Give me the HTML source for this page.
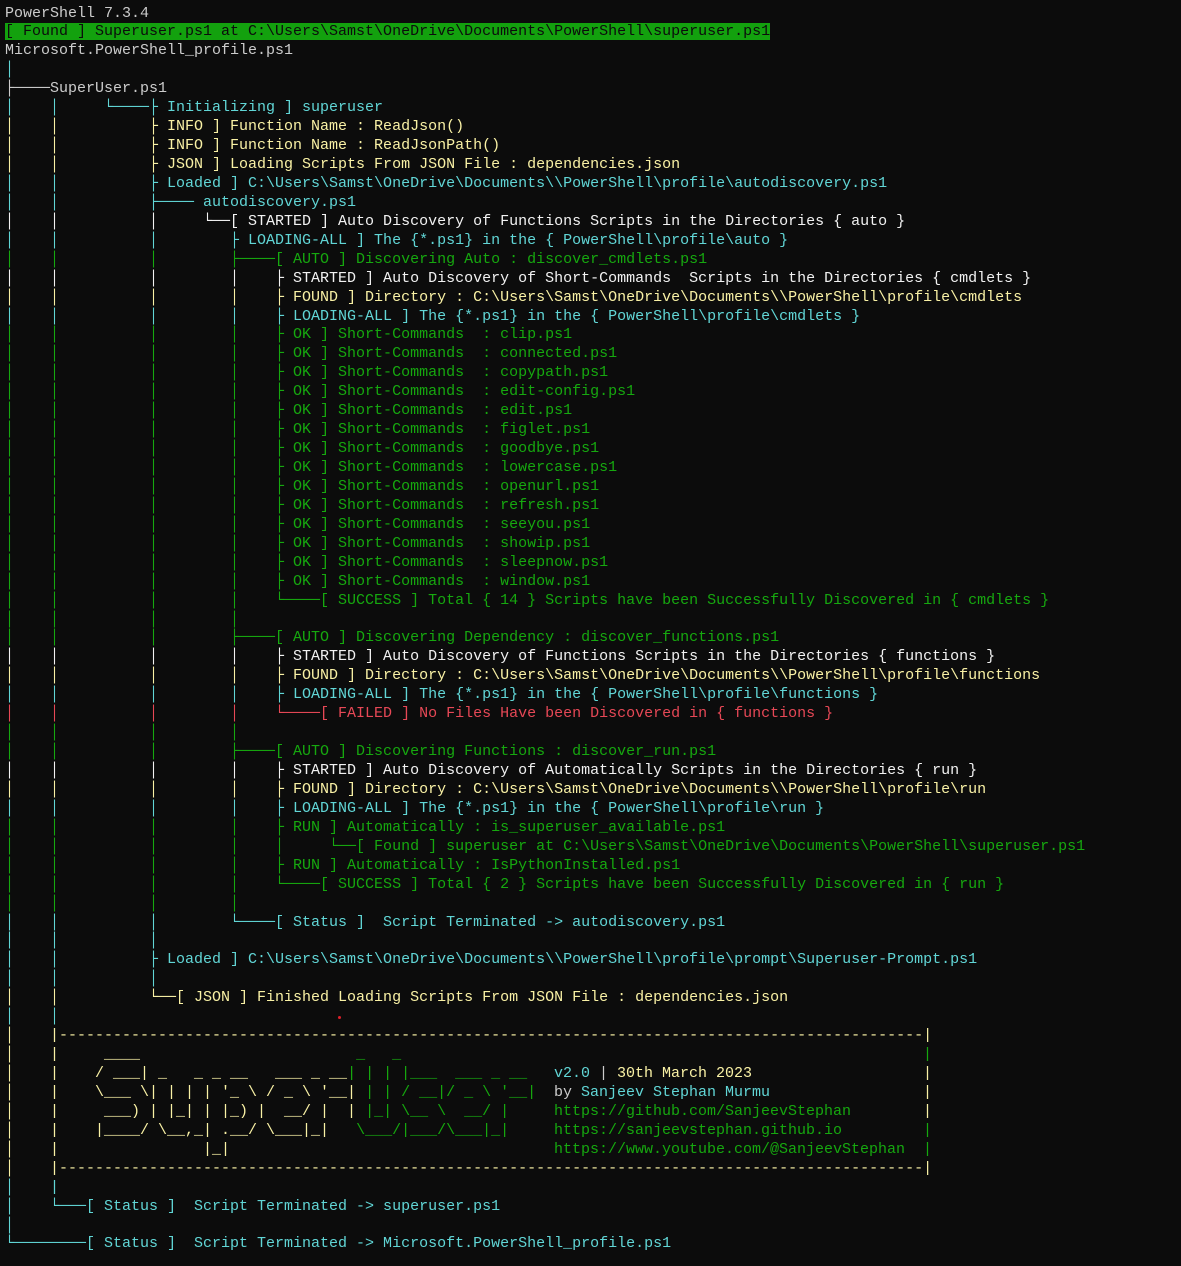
<!DOCTYPE html>
<html><head><meta charset="utf-8">
<style>
html,body{margin:0;padding:0;background:#0c0c0c;}
body{width:1181px;height:1266px;overflow:hidden;position:relative;}
#t{position:absolute;left:5px;top:4.5px;font-family:"Liberation Mono",monospace;font-size:15px;}
#t div{height:18.94px;line-height:18.94px;position:relative;white-space:pre;}
.c{color:#61d6d6}.y{color:#f9f1a5}.g{color:#16a80f}.w{color:#f2f2f2}.r{color:#e74856}.d{color:#cccccc}
.hl{background:#13a10e;color:#0c0c0c}
.ab{position:absolute;top:0}
</style></head><body>
<div id="t"><div class="d">PowerShell 7.3.4</div><div><span class="hl">[ Found ] Superuser.ps1 at C:\Users\Samst\OneDrive\Documents\PowerShell\superuser.ps1</span></div><div class="d">Microsoft.PowerShell_profile.ps1</div><div class="c">│</div><div class="d">├────SuperUser.ps1</div><div class="c">│    │     └────├ Initializing ] superuser</div><div class="y">│    │          ├ INFO ] Function Name : ReadJson()</div><div class="y">│    │          ├ INFO ] Function Name : ReadJsonPath()</div><div class="y">│    │          ├ JSON ] Loading Scripts From JSON File : dependencies.json</div><div class="c">│    │          ├ Loaded ] C:\Users\Samst\OneDrive\Documents\\PowerShell\profile\autodiscovery.ps1</div><div class="c">│    │          ├──── autodiscovery.ps1</div><div class="w">│    │          │     └──[ STARTED ] Auto Discovery of Functions Scripts in the Directories { auto }</div><div class="c">│    │          │        ├ LOADING-ALL ] The {*.ps1} in the { PowerShell\profile\auto }</div><div class="g">│    │          │        ├────[ AUTO ] Discovering Auto : discover_cmdlets.ps1</div><div class="w">│    │          │        │    ├ STARTED ] Auto Discovery of Short-Commands  Scripts in the Directories { cmdlets }</div><div class="y">│    │          │        │    ├ FOUND ] Directory : C:\Users\Samst\OneDrive\Documents\\PowerShell\profile\cmdlets</div><div class="c">│    │          │        │    ├ LOADING-ALL ] The {*.ps1} in the { PowerShell\profile\cmdlets }</div><div class="g">│    │          │        │    ├ OK ] Short-Commands  : clip.ps1</div><div class="g">│    │          │        │    ├ OK ] Short-Commands  : connected.ps1</div><div class="g">│    │          │        │    ├ OK ] Short-Commands  : copypath.ps1</div><div class="g">│    │          │        │    ├ OK ] Short-Commands  : edit-config.ps1</div><div class="g">│    │          │        │    ├ OK ] Short-Commands  : edit.ps1</div><div class="g">│    │          │        │    ├ OK ] Short-Commands  : figlet.ps1</div><div class="g">│    │          │        │    ├ OK ] Short-Commands  : goodbye.ps1</div><div class="g">│    │          │        │    ├ OK ] Short-Commands  : lowercase.ps1</div><div class="g">│    │          │        │    ├ OK ] Short-Commands  : openurl.ps1</div><div class="g">│    │          │        │    ├ OK ] Short-Commands  : refresh.ps1</div><div class="g">│    │          │        │    ├ OK ] Short-Commands  : seeyou.ps1</div><div class="g">│    │          │        │    ├ OK ] Short-Commands  : showip.ps1</div><div class="g">│    │          │        │    ├ OK ] Short-Commands  : sleepnow.ps1</div><div class="g">│    │          │        │    ├ OK ] Short-Commands  : window.ps1</div><div class="g">│    │          │        │    └────[ SUCCESS ] Total { 14 } Scripts have been Successfully Discovered in { cmdlets }</div><div class="g">│    │          │        │</div><div class="g">│    │          │        ├────[ AUTO ] Discovering Dependency : discover_functions.ps1</div><div class="w">│    │          │        │    ├ STARTED ] Auto Discovery of Functions Scripts in the Directories { functions }</div><div class="y">│    │          │        │    ├ FOUND ] Directory : C:\Users\Samst\OneDrive\Documents\\PowerShell\profile\functions</div><div class="c">│    │          │        │    ├ LOADING-ALL ] The {*.ps1} in the { PowerShell\profile\functions }</div><div class="r">│    │          │        │    └────[ FAILED ] No Files Have been Discovered in { functions }</div><div class="g">│    │          │        │</div><div class="g">│    │          │        ├────[ AUTO ] Discovering Functions : discover_run.ps1</div><div class="w">│    │          │        │    ├ STARTED ] Auto Discovery of Automatically Scripts in the Directories { run }</div><div class="y">│    │          │        │    ├ FOUND ] Directory : C:\Users\Samst\OneDrive\Documents\\PowerShell\profile\run</div><div class="c">│    │          │        │    ├ LOADING-ALL ] The {*.ps1} in the { PowerShell\profile\run }</div><div class="g">│    │          │        │    ├ RUN ] Automatically : is_superuser_available.ps1</div><div class="g">│    │          │        │    │     └──[ Found ] superuser at C:\Users\Samst\OneDrive\Documents\PowerShell\superuser.ps1</div><div class="g">│    │          │        │    ├ RUN ] Automatically : IsPythonInstalled.ps1</div><div class="g">│    │          │        │    └────[ SUCCESS ] Total { 2 } Scripts have been Successfully Discovered in { run }</div><div class="g">│    │          │        │</div><div class="c">│    │          │        └────[ Status ]  Script Terminated -&gt; autodiscovery.ps1</div><div class="c">│    │          │</div><div class="c">│    │          ├ Loaded ] C:\Users\Samst\OneDrive\Documents\\PowerShell\profile\prompt\Superuser-Prompt.ps1</div><div class="c">│    │          │</div><div class="y">│    │          └──[ JSON ] Finished Loading Scripts From JSON File : dependencies.json</div><div class="c">│    │</div><div class="y">│    |------------------------------------------------------------------------------------------------|</div><div class="y">│    |     ____                        <span class="g">_   _</span><span class="ab g" style="left:918px">|</span></div><div class="y">│    |    / ___| _   _ _ __   ___ _ __<span class="g">| | | |___  ___ _ __</span><span class="ab" style="left:549px"><span class="c">v2.0</span><span class="d"> | </span><span class="y">30th March 2023</span></span><span class="ab" style="left:918px">|</span></div><div class="y">│    |    \___ \| | | | '_ \ / _ \ '__|<span class="g"> | | / __|/ _ \ '__|</span><span class="ab" style="left:549px"><span class="d">by </span><span class="c">Sanjeev Stephan Murmu</span></span><span class="ab" style="left:918px">|</span></div><div class="y">│    |     ___) | |_| | |_) |  __/ |  |<span class="g"> |_| \__ \  __/ |</span><span class="ab g" style="left:549px">https://github.com/SanjeevStephan</span><span class="ab" style="left:918px">|</span></div><div class="y">│    |    |____/ \__,_| .__/ \___|_|<span class="g">   \___/|___/\___|_|</span><span class="ab g" style="left:549px">https://sanjeevstephan.github.io</span><span class="ab g" style="left:918px">|</span></div><div class="y">│    |                |_|<span class="ab g" style="left:549px">https://www.youtube.com/@SanjeevStephan</span><span class="ab g" style="left:918px">|</span></div><div class="y">│    |------------------------------------------------------------------------------------------------|</div><div class="c">│    |</div><div class="c">│    └───[ Status ]  Script Terminated -&gt; superuser.ps1</div><div class="c">│</div><div class="c">└────────[ Status ]  Script Terminated -&gt; Microsoft.PowerShell_profile.ps1</div></div>
<div style="position:absolute;left:338px;top:1016px;width:3px;height:3px;border-radius:50%;background:#e0202a"></div>
</body></html>
